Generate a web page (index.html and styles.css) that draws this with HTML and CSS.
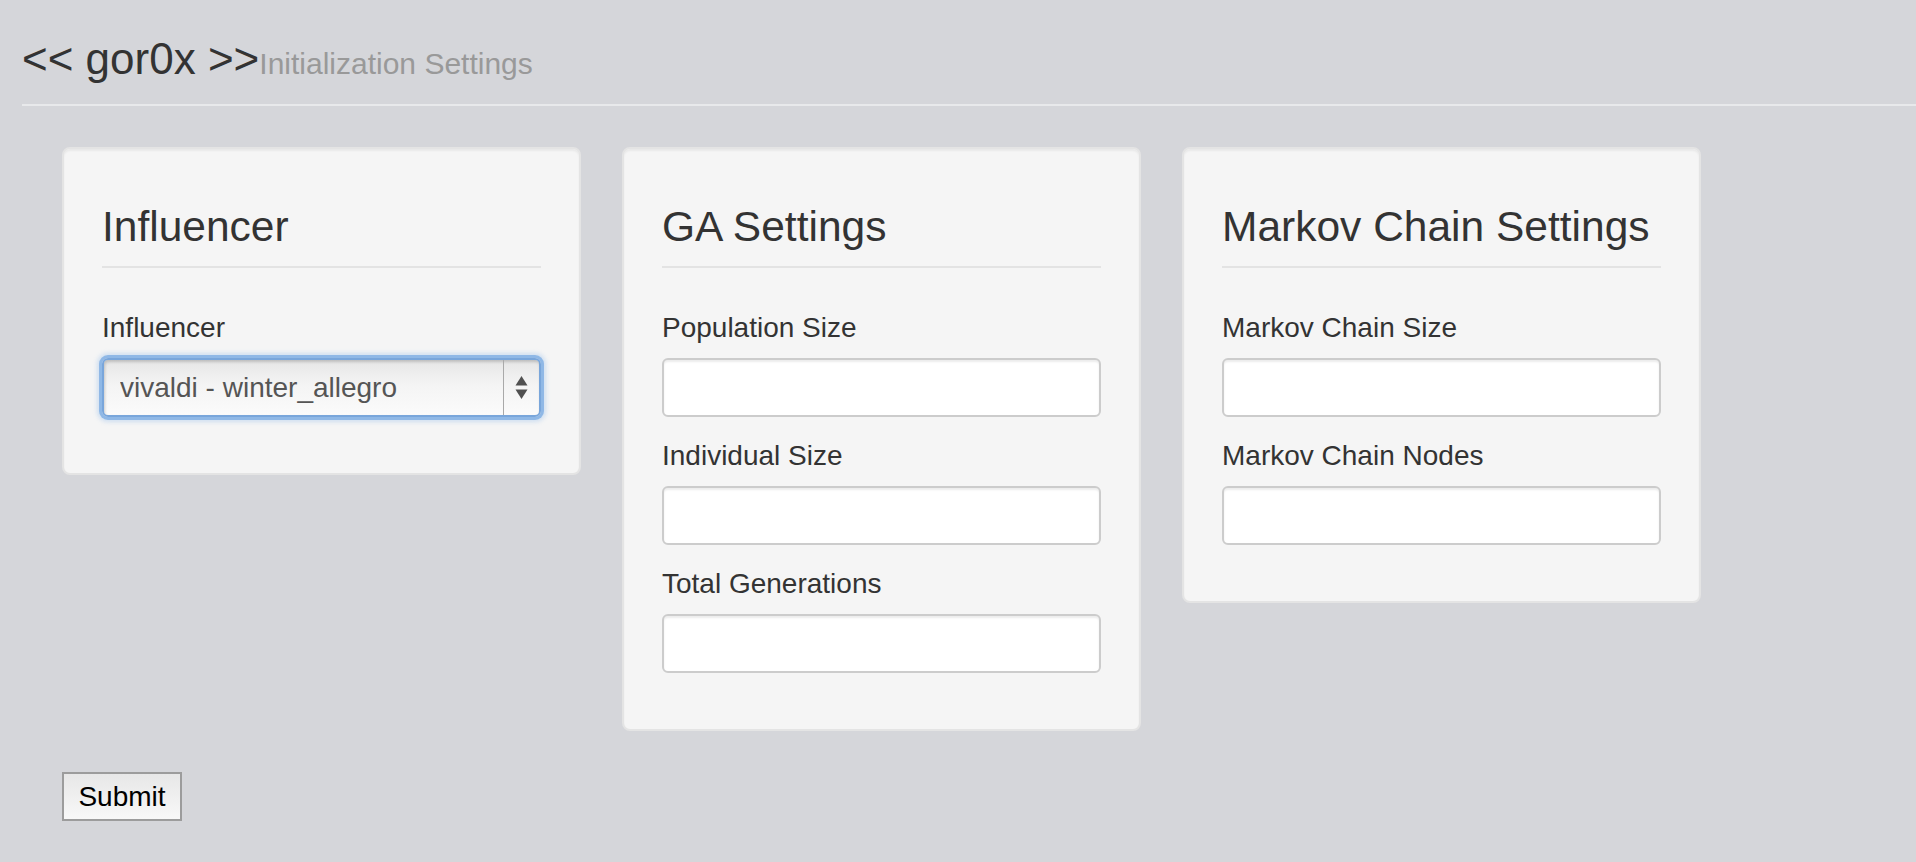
FILE: index.html
```html
<!DOCTYPE html>
<html lang="en">
<head>
<meta charset="utf-8">
<title>gor0x - Initialization Settings</title>
<link rel="stylesheet" href="styles.css">
</head>
<body>
<div class="page">
  <header class="page-header">
    <h1 class="title">&lt;&lt; gor0x &gt;&gt;<small class="subtitle">Initialization Settings</small></h1>
  </header>
  <div class="rule"></div>
  <form class="settings-form">
    <div class="cards">
      <section class="card">
        <h2 class="card-title">Influencer</h2>
        <div class="field">
          <label class="field-label" for="influencer">Influencer</label>
          <div class="select-wrap">
            <select id="influencer" class="select">
              <option>vivaldi - winter_allegro</option>
            </select>
            <span class="select-arrows">
              <svg width="13" height="24" viewBox="0 0 13 24" aria-hidden="true">
                <polygon points="6.5,0 12.5,9.5 0.5,9.5" fill="#505050"/>
                <polygon points="0.5,13.5 12.5,13.5 6.5,23" fill="#505050"/>
              </svg>
            </span>
          </div>
        </div>
      </section>
      <section class="card">
        <h2 class="card-title">GA Settings</h2>
        <div class="field">
          <label class="field-label" for="pop">Population Size</label>
          <input id="pop" class="text-input" type="text">
        </div>
        <div class="field">
          <label class="field-label" for="ind">Individual Size</label>
          <input id="ind" class="text-input" type="text">
        </div>
        <div class="field">
          <label class="field-label" for="gen">Total Generations</label>
          <input id="gen" class="text-input" type="text">
        </div>
      </section>
      <section class="card">
        <h2 class="card-title">Markov Chain Settings</h2>
        <div class="field">
          <label class="field-label" for="mcs">Markov Chain Size</label>
          <input id="mcs" class="text-input" type="text">
        </div>
        <div class="field">
          <label class="field-label" for="mcn">Markov Chain Nodes</label>
          <input id="mcn" class="text-input" type="text">
        </div>
      </section>
    </div>
    <button type="submit" class="submit">Submit</button>
  </form>
</div>
</body>
</html>
```
FILE: styles.css
```css
html, body {
  margin: 0;
  padding: 0;
}

body {
  background: #d5d6da;
  font-family: "Liberation Sans", Arial, Helvetica, sans-serif;
  color: #333333;
}

.page {
  padding-left: 22px;
}

.page-header {
  padding-top: 35px;
}

.title {
  margin: 0;
  height: 48px;
  font-size: 44px;
  font-weight: normal;
  line-height: 48px;
  color: #333333;
  white-space: nowrap;
}

.subtitle {
  font-size: 30px;
  line-height: 30px;
  color: #999999;
}

.rule {
  margin-top: 21px;
  height: 2px;
  background: #e8e9eb;
}

.settings-form {
  margin-left: 40px;
  padding-top: 41px;
}

.cards {
  display: flex;
  align-items: flex-start;
  gap: 41px;
}

.card {
  box-sizing: border-box;
  width: 519px;
  padding: 38px 38px 37px;
  background: #f5f5f5;
  border: 2px solid #e4e4e4;
  border-radius: 8px;
  box-shadow: inset 0 2px 2px rgba(0, 0, 0, 0.05);
}

.card-title {
  margin: 0 0 40px;
  font-size: 42.5px;
  font-weight: normal;
  line-height: 79px;
  color: #333333;
  border-bottom: 2px solid #e3e3e3;
}

.field-label {
  display: block;
  font-size: 28px;
  line-height: 40px;
  margin-bottom: 10px;
  color: #333333;
}

.text-input,
.select-wrap {
  display: block;
  box-sizing: border-box;
  width: 100%;
  height: 59px;
  margin: 0 0 19px;
}

.text-input {
  padding: 0 12px;
  background: #ffffff;
  border: 2px solid #cccccc;
  border-radius: 6px;
  box-shadow: inset 0 2px 2px rgba(0, 0, 0, 0.075);
  font-family: inherit;
  font-size: 28px;
  color: #555555;
  outline: none;
}

.select-wrap {
  position: relative;
}

.select {
  -webkit-appearance: none;
  appearance: none;
  display: block;
  box-sizing: border-box;
  width: 100%;
  height: 59px;
  margin: 0;
  padding: 0 40px 0 16px;
  font-family: inherit;
  font-size: 28px;
  color: #555555;
  background: linear-gradient(#e6e6e6, #f4f4f4 45%, #fbfbfb);
  border: 2px solid #79a6db;
  border-radius: 6px;
  box-shadow: 0 0 0 3px rgba(132, 176, 228, 0.85), 0 0 4px 5px rgba(150, 190, 235, 0.4), inset 1px 2px 3px rgba(0, 0, 0, 0.18);
  outline: none;
}

.select-arrows {
  position: absolute;
  top: 2px;
  right: 2px;
  bottom: 2px;
  width: 35px;
  display: flex;
  align-items: center;
  justify-content: center;
  border-left: 1px solid #a9a9a9;
  pointer-events: none;
}

.submit {
  display: block;
  box-sizing: border-box;
  width: 120px;
  height: 49px;
  margin-top: 41px;
  padding: 0;
  font-family: inherit;
  font-size: 28px;
  color: #000000;
  background: linear-gradient(#e7e7e7, #f8f8f8);
  border: 2px solid #9c9c9c;
  border-radius: 0;
}
```
